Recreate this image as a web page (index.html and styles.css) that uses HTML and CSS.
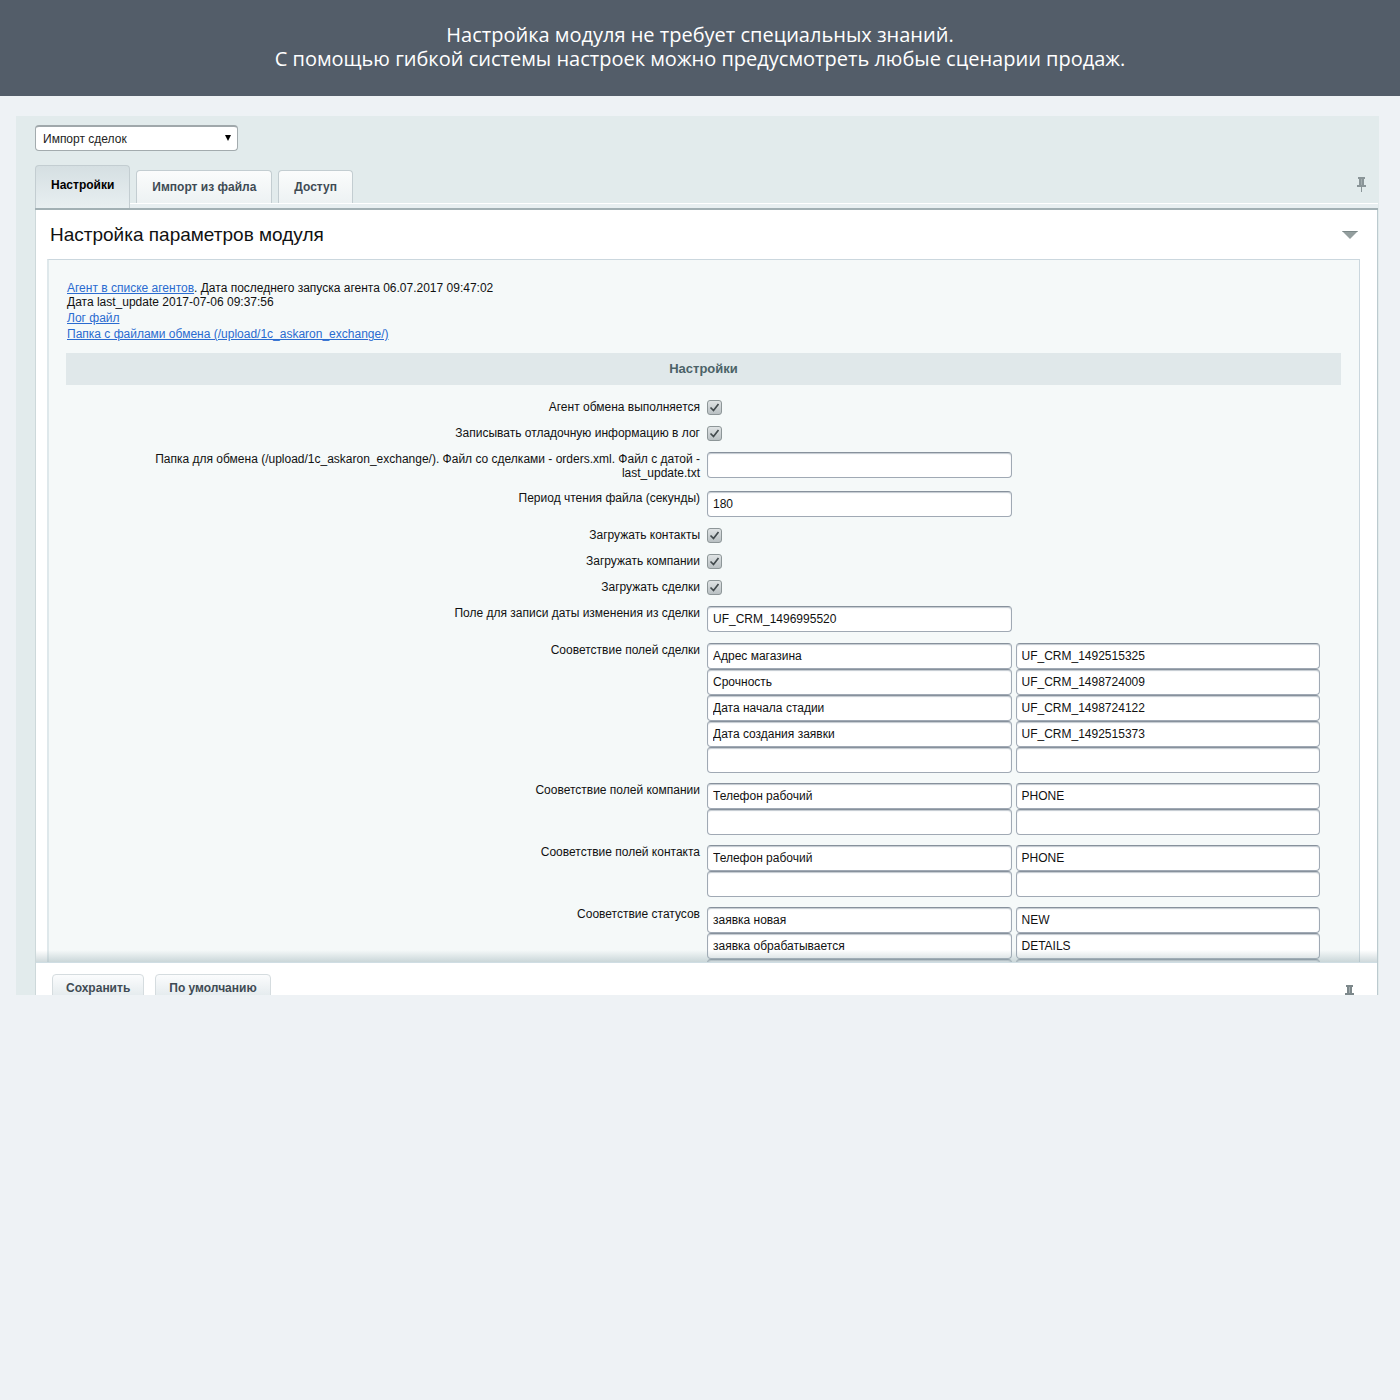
FILE: index.html
```html
<!DOCTYPE html>
<html lang="ru">
<head>
  <meta charset="UTF-8" />
  <title>Настройка параметров модуля</title>
  <link rel="stylesheet" href="styles.css">
</head>
<body>

  <header class="banner">
    Настройка модуля не требует специальных знаний.<br>
    С помощью гибкой системы настроек можно предусмотреть любые сценарии продаж.
  </header>

  <main class="admin">
    <div class="module-select">
      <select aria-label="Модуль">
        <option>Импорт сделок</option>
      </select>
      <svg class="select-arrow" width="6" height="6" viewBox="0 0 6 6"><path d="M0 0h6L3 6z"/></svg>
    </div>

    <nav class="tabs">
      <button type="button" class="tab active">Настройки</button>
      <button type="button" class="tab">Импорт из файла</button>
      <button type="button" class="tab">Доступ</button>
      <button type="button" class="pin" aria-label="Закрепить">
        <svg width="9" height="16" viewBox="0 0 9 16"><path fill="#8a9598" d="M1 0h7v2H7v6h2v2H0V8h2V2H1zM4 10h1v5H4z"/><path fill="#a3adaf" d="M4 2h1v6H4z"/></svg>
      </button>
    </nav>
    <div class="tabs-line"></div>

    <form class="box" id="settingsForm">
      <div class="box-body">
        <div class="title-row">
          <h1>Настройка параметров модуля</h1>
          <button type="button" class="collapse" aria-label="Свернуть">
            <svg width="16" height="8" viewBox="0 0 16 8"><path fill="#939e9e" d="M0 0h16L8 8z"/><path fill="#7b8888" d="M0 0h16l-1 1H1z"/></svg>
          </button>
        </div>

        <div class="content">
          <div class="info">
            <div><a href="#">Агент в списке агентов</a>. Дата последнего запуска агента 06.07.2017 09:47:02</div>
            <div>Дата last_update 2017-07-06 09:37:56</div>
            <div class="info-links">
              <a href="#">Лог файл</a><br>
              <a href="#">Папка с файлами обмена (/upload/1c_askaron_exchange/)</a>
            </div>
          </div>

          <h2>Настройки</h2>

          <div class="row">
            <label for="agent">Агент обмена выполняется</label>
            <div class="fields"><input type="checkbox" id="agent" checked></div>
          </div>
          <div class="row">
            <label for="debug">Записывать отладочную информацию в лог</label>
            <div class="fields"><input type="checkbox" id="debug" checked></div>
          </div>
          <div class="row">
            <label for="folder">Папка для обмена (/upload/1c_askaron_exchange/). Файл со сделками - orders.xml. Файл с датой - last_update.txt</label>
            <div class="fields"><input type="text" id="folder"></div>
          </div>
          <div class="row">
            <label for="period">Период чтения файла (секунды)</label>
            <div class="fields"><input type="text" id="period" value="180"></div>
          </div>
          <div class="row">
            <label for="contacts">Загружать контакты</label>
            <div class="fields"><input type="checkbox" id="contacts" checked></div>
          </div>
          <div class="row">
            <label for="companies">Загружать компании</label>
            <div class="fields"><input type="checkbox" id="companies" checked></div>
          </div>
          <div class="row">
            <label for="deals">Загружать сделки</label>
            <div class="fields"><input type="checkbox" id="deals" checked></div>
          </div>
          <div class="row">
            <label for="dateField">Поле для записи даты изменения из сделки</label>
            <div class="fields"><input type="text" id="dateField" value="UF_CRM_1496995520"></div>
          </div>
          <div class="row map">
            <label for="dealMap">Сооветствие полей сделки</label>
            <div class="fields">
              <input type="text" id="dealMap" value="Адрес магазина"><input type="text" aria-label="Код поля" value="UF_CRM_1492515325">
              <input type="text" aria-label="Поле" value="Срочность"><input type="text" aria-label="Код поля" value="UF_CRM_1498724009">
              <input type="text" aria-label="Поле" value="Дата начала стадии"><input type="text" aria-label="Код поля" value="UF_CRM_1498724122">
              <input type="text" aria-label="Поле" value="Дата создания заявки"><input type="text" aria-label="Код поля" value="UF_CRM_1492515373">
              <input type="text" aria-label="Поле"><input type="text" aria-label="Код поля">
            </div>
          </div>
          <div class="row map">
            <label for="companyMap">Сооветствие полей компании</label>
            <div class="fields">
              <input type="text" id="companyMap" value="Телефон рабочий"><input type="text" aria-label="Код поля" value="PHONE">
              <input type="text" aria-label="Поле"><input type="text" aria-label="Код поля">
            </div>
          </div>
          <div class="row map">
            <label for="contactMap">Сооветствие полей контакта</label>
            <div class="fields">
              <input type="text" id="contactMap" value="Телефон рабочий"><input type="text" aria-label="Код поля" value="PHONE">
              <input type="text" aria-label="Поле"><input type="text" aria-label="Код поля">
            </div>
          </div>
          <div class="row map">
            <label for="statusMap">Сооветствие статусов</label>
            <div class="fields">
              <input type="text" id="statusMap" value="заявка новая"><input type="text" aria-label="Код статуса" value="NEW">
              <input type="text" aria-label="Статус" value="заявка обрабатывается"><input type="text" aria-label="Код статуса" value="DETAILS">
              <input type="text" aria-label="Статус"><input type="text" aria-label="Код статуса">
            </div>
          </div>
        </div>
      </div>

      <div class="footer">
        <button type="submit" class="btn">Сохранить</button>
        <button type="reset" class="btn">По умолчанию</button>
        <button type="button" class="pin" aria-label="Закрепить">
          <svg width="9" height="16" viewBox="0 0 9 16"><path fill="#7d888b" d="M1 0h7v2H7v6h2v2H0V8h2V2H1zM4 10h1v5H4z"/><path fill="#a3adaf" d="M4 2h1v6H4z"/></svg>
        </button>
      </div>
    </form>
  </main>

  <script>
    document.getElementById('settingsForm').addEventListener('submit', function(e){
      e.preventDefault();
    });
  </script>

</body>
</html>
```
FILE: styles.css
```css
* {
  box-sizing: border-box;
}
body {
  margin: 0;
  background: #eef2f5;
  color: #111;
  font-family: "Liberation Sans", Arial, sans-serif;
  font-size: 12px;
  line-height: 14px;
}
button, input, select {
  font-family: inherit;
  font-size: 12px;
}
svg {
  display: block;
}
a {
  color: #2a6bd0;
}

.banner {
  padding: 23px 20px 25px;
  background: #535d69;
  color: #fff;
  font-family: "Open Sans", sans-serif;
  font-size: 20px;
  line-height: 24px;
  text-align: center;
}

.admin {
  margin: 20px 21px 0 16px;
  padding: 9px 1px 0 19px;
  background: #e2ebec;
}

/* module drop-down */
.module-select {
  position: relative;
  width: 203px;
}
.module-select select {
  display: block;
  width: 100%;
  height: 26px;
  padding: 0 24px 0 7px;
  appearance: none;
  background: #fff;
  border: 1px solid #a3abae;
  border-top: 2px solid #a0a8ab;
  border-radius: 4px;
  color: #222;
}
.select-arrow {
  position: absolute;
  right: 7px;
  top: 10px;
  pointer-events: none;
}

/* tabs */
.tabs {
  display: flex;
  align-items: flex-end;
  gap: 6px;
  margin-top: 14px;
}
.tab {
  height: 33px;
  padding: 0 15px;
  background: linear-gradient(#fbfcfc, #edf2f3);
  border: 1px solid #c3cdd1;
  border-bottom: none;
  border-radius: 4px 4px 0 0;
  color: #3f4b54;
  font-weight: bold;
  cursor: pointer;
}
.tab.active {
  position: relative;
  height: 43px;
  margin-bottom: -5px;
  padding-bottom: 4px;
  background: linear-gradient(#d5dfe2, #e8eff1);
  color: #000;
}
.pin, .collapse {
  margin-left: auto;
  padding: 0;
  background: none;
  border: none;
  cursor: pointer;
}
.tabs .pin {
  margin-right: 12px;
  margin-bottom: 10px;
}
.tabs-line {
  height: 7px;
  background: #e8eff1;
  border-top: 1px solid #fff;
  border-bottom: 2px solid #a2b0b4;
}

/* white box */
.box {
  background: #fff;
  border-left: 1px solid #cdd8da;
  border-right: 1px solid #bccacf;
}
.box-body {
  position: relative;
  height: 752px;
  padding: 0 17px 0 11px;
  overflow: hidden;
}
.box-body::after {
  content: "";
  position: absolute;
  left: 0;
  right: 0;
  bottom: 0;
  height: 12px;
  background: linear-gradient(rgba(160, 180, 185, 0), rgba(160, 180, 185, 0.5));
  pointer-events: none;
}
.title-row {
  display: flex;
  align-items: center;
  height: 49px;
  padding: 0 2px 0 3px;
}
h1 {
  margin: 0;
  font-size: 19px;
  font-weight: normal;
  line-height: 24px;
}
.content {
  padding: 21px 18px 21px 17px;
  background: #f5f9f9;
  border: 1px solid #cbd7de;
  border-left: 2px solid #dfe8eb;
}
.info {
  padding-left: 1px;
}
.info-links {
  margin-top: 1px;
  line-height: 16px;
}
h2 {
  margin: 11px 0 9px;
  background: #e0e8ea;
  color: #4b6267;
  font-size: 13px;
  line-height: 32px;
  text-align: center;
}

/* settings rows */
.row {
  display: grid;
  grid-template-columns: 1fr 1fr;
  gap: 7px;
  padding: 6px 0 5px;
}
.row.map {
  padding-bottom: 4px;
}
.row label {
  padding-left: 20px;
  text-align: right;
}
.fields {
  display: grid;
  grid-template-columns: 1fr 1fr;
  column-gap: 4px;
  padding-right: 21px;
  align-content: start;
}
input[type="text"] {
  width: 100%;
  height: 26px;
  padding: 0 5px;
  background: #fff;
  border: 1px solid #a0a9b4;
  border-top-color: #87919c;
  border-radius: 4px;
  box-shadow: inset 0 1px 1px #c2c9d0;
  color: #111;
}
input[type="checkbox"] {
  width: 15px;
  height: 15px;
  margin: 0;
  appearance: none;
  border: 1px solid #8d9698;
  border-radius: 3px;
  background: linear-gradient(#dfe3e4, #b9c0c3);
}
input[type="checkbox"]:checked {
  background: url("data:image/svg+xml,%3Csvg xmlns='http://www.w3.org/2000/svg' viewBox='0 0 13 13'%3E%3Cpath d='M2.500 6.500l3 3 5-6.500' fill='none' stroke='%23434b4e' stroke-width='1.700'/%3E%3C/svg%3E"), linear-gradient(#dfe3e4, #b9c0c3);
}

/* bottom bar */
.footer {
  display: flex;
  align-items: flex-start;
  gap: 11px;
  height: 33px;
  padding: 11px 23px 0 16px;
  border-top: 1px solid #cfdde3;
  overflow: hidden;
}
.btn {
  flex: none;
  height: 28px;
  padding: 0 13px;
  background: linear-gradient(#fbfcfd, #dfe7ea);
  border: 1px solid #d5dcdf;
  border-radius: 4px;
  color: #3f4b54;
  font-weight: bold;
  cursor: pointer;
}
.footer .pin {
  margin-top: 11px;
}
```
